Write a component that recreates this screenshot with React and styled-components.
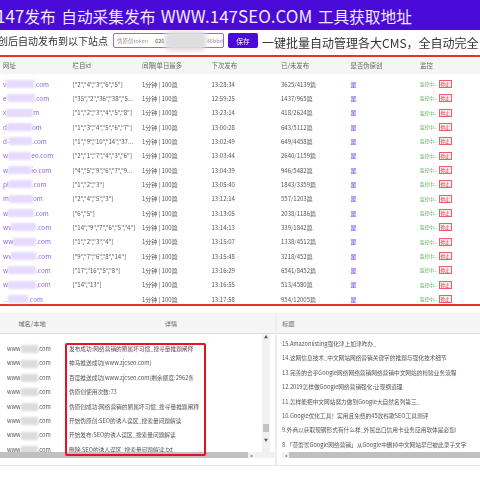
import React from 'react'
import styled, { createGlobalStyle } from 'styled-components'

const Global = createGlobalStyle`
  html, body { margin: 0; padding: 0; background: #fff; }
  body { width: 480px; height: 480px; overflow: hidden; font-family: "Noto Sans CJK SC", "Noto Sans", sans-serif; }
`

const sites = [
  ['v', 28, '.com', '["2","4","3","6","5"]', '13:28:34', '3625/4139篇'],
  ['e', 28, '.com', '["35","2","36","38","5...', '12:59:25', '1437/965篇'],
  ['x', 27, 'm', '["1","2","3","4","5","8"]', '13:23:14', '418/2624篇'],
  ['d', 25, 'om', '["1","3","4","5","6","7"]', '13:00:28', '643/5112篇'],
  ['d-', 23, '.com', '["1","9","10","14","37...', '13:02:49', '649/4458篇'],
  ['w', 23, 'eo.com', '["2","1","7","4","3","6"]', '13:03:44', '2640/1159篇'],
  ['w', 23, 'io.com', '["4","5","9","6","7","9...', '13:04:39', '946/5482篇'],
  ['pl', 23, '.com', '["1","2","3"]', '13:05:40', '1843/3359篇'],
  ['m', 24, 'om', '["2","4","5","3"]', '13:12:14', '557/1203篇'],
  ['w', 26, '.com', '["6","5"]', '13:13:05', '2038/1186篇'],
  ['wv', 25, '.com', '["14","9","7","6","5","4"]', '13:14:13', '339/1842篇'],
  ['ww', 23, '.com', '["1","2","3","4"]', '13:15:07', '1338/4512篇'],
  ['wv', 25, '.com', '["9","7","6","8","14"]', '13:15:48', '3218/452篇'],
  ['w', 28, '.com', '["17","16","5","8"]', '13:16:29', '6541/8452篇'],
  ['w', 28, '.com', '["14","13"]', '13:16:55', '513/4580篇'],
  ['...', 20, '.com', '', '13:17:58', '954/12005篇'],
]

const details = [
  ['发布成功:网络营销的陋属坏习惯_搜寻量推题阐释', '15.Amazonlisting强化津上加津咋办_'],
  ['神马推送成功[www.zjcseo.com]', '14.这网信息技术_中文网站网络营销关键字的推题与强化技术细节'],
  ['百度推送成功[www.zjcseo.com]剩余额度:2962条', '13.完善的合乎Google网络网络营销网络营销中文网站的检验业务流程'],
  ['伪原创使用次数:73', '12.2019怎样做Google网络营销强化:让现纲道理'],
  ['伪原创成功:网络营销的陋属坏习惯_搜寻量推题阐释', '11.怎样能把中文网站努力做到Google大自然名列第三_'],
  ['开始伪原创:SEO的诱人误区_搜索量问题解读', '10.Google优化工具！实用且免费的45款谷歌SEO工具测评'],
  ['开始发布:SEO的诱人误区_搜索量问题解读', '9.外商以获取现钢形式有什么样_外贸出口信用卡业务应用软体是必您!'],
  ['删除:SEO的诱人误区_搜索量问题解读.txt', '8.「莫蕾景Google网络营销」从Google中删掉中文网站早已被此录子文字'],
]

const Page = styled.div`
  width: 480px;
  height: 480px;
  overflow: hidden;
  display: flex;
  flex-direction: column;
  filter: blur(0.35px);
`

const Banner = styled.div`
  height: 30px;
  flex: none;
  background: #4a0ad8;
  color: #f1eafd;
  font-size: 15.7px;
  line-height: 31px;
  word-spacing: 2px;
  text-indent: -4px;
  white-space: nowrap;
  overflow: hidden;
`

const Latin = styled.span`
  font-size: 17px;
`

const Toolbar = styled.div`
  height: 27px;
  flex: none;
  box-sizing: border-box;
  padding-bottom: 4px;
  display: flex;
  align-items: center;
  white-space: nowrap;
  overflow: hidden;
  font-size: 10px;
  color: #333;
  border-bottom: 2px solid #e5332a;
`

const LeadText = styled.span`
  margin-left: -2px;
  flex: none;
`

const TokenField = styled.div`
  flex: none;
  width: 111px;
  height: 15px;
  margin-left: 5px;
  padding-left: 3px;
  display: flex;
  align-items: center;
  box-sizing: border-box;
  border: 1px solid #8d6ce6;
  border-radius: 2px;
  font-size: 5.5px;
  color: #999;
`

const TokenValue = styled.span`
  margin-left: 7px;
  color: #555;
`

const TokenMask = styled.span`
  width: 48px;
  height: 20px;
  background: #dedede;
  border-radius: 8px;
  filter: blur(2px);
`

const SaveButton = styled.button`
  flex: none;
  width: 30px;
  height: 15px;
  margin-left: 4px;
  padding: 0;
  border: 0;
  border-radius: 2px;
  background: #4a0ad8;
  color: #fff;
  font: 6.5px "Noto Sans CJK SC", sans-serif;
`

const Slogan = styled.span`
  flex: none;
  margin: 3px 0 0 4px;
  font-size: 12px;
`

const Row = styled.div`
  display: grid;
  grid-template-columns: repeat(6, 69.5px) 60px;
  align-items: center;
  padding-left: 3px;
  height: ${p => p.$head ? '17px' : '14.33px'};
  font-size: ${p => p.$head ? '6.4px' : '6px'};
  color: ${p => p.$head ? '#666' : '#555'};
  background: ${p => p.$head ? '#f5f5f5' : 'transparent'};
  white-space: nowrap;
`

const Rows = styled.div`
  padding-top: 3px;
  height: 232px;
  flex: none;
  box-sizing: border-box;
  border-bottom: 2px solid #e5332a;
`

const Site = styled.span`
  color: #8a63e0;
  font-size: 6.4px;
  display: flex;
  align-items: center;
`

const Mask = styled.span`
  display: inline-block;
  width: ${p => p.$w}px;
  height: 8px;
  background: ${p => p.$grey ? '#dcdcdc' : '#e6dafc'};
  filter: blur(1px);
`

const Flag = styled.span`
  color: #7a4fe0;
  font-weight: 500;
`

const Watch = styled.span`
  display: flex;
  align-items: center;
  gap: 1px;
  color: #55a855;
  font-size: 4.6px;
`

const Stop = styled.span`
  width: 11px;
  height: 6px;
  line-height: 6px;
  text-align: center;
  border: 1px solid #e8606a;
  background: #fdecec;
  color: #c0303a;
  font-size: 4.6px;
`

const Lower = styled.div`
  position: relative;
  margin-top: 7px;
  height: 152px;
  flex: none;
  display: grid;
  grid-template-columns: 277px 1fr;
  border-bottom: 1px solid #e8e8e8;
  font-size: 5.7px;
  color: #555;
`

const Pane = styled.div`
  display: flex;
  flex-direction: column;
  overflow: hidden;
  border-right: ${p => p.$divider ? '2px solid #eee' : '0'};
`

const PaneHead = styled.div`
  height: 20px;
  flex: none;
  display: grid;
  grid-template-columns: ${p => p.$columns};
  align-items: center;
  background: #f5f5f5;
  border-bottom: 1px solid #ddd;
  color: #666;
  font-size: 6.2px;
  padding-left: ${p => p.$inset || 0}px;
`

const Centered = styled.span`
  text-align: center;
`

const PaneBody = styled.div`
  height: 118px;
  flex: none;
  display: flex;
  overflow: hidden;
`

const List = styled.div`
  flex: 1;
  padding-top: ${p => p.$top}px;
  min-width: 0;
`

const ListRow = styled.div`
  height: 14.4px;
  line-height: 14.4px;
  display: grid;
  grid-template-columns: ${p => p.$columns};
  white-space: nowrap;
  padding-left: ${p => p.$inset || 0}px;
`

const Domain = styled.span`
  display: flex;
  align-items: center;
  padding-left: 7px;
`

const VBar = styled.div`
  width: 8px;
  margin-right: 5px;
  flex: none;
  background: #f1f1f1;
  display: flex;
  flex-direction: column;
  align-items: center;
  color: #555;
  font-size: 4px;
  line-height: 7px;
`

const VThumb = styled.div`
  width: 6px;
  height: 8px;
  margin-top: 83px;
  margin-bottom: 5px;
  background: #c4c4c4;
`

const HBar = styled.div`
  height: 6px;
  flex: none;
  display: flex;
  align-items: center;
  background: #f1f1f1;
  margin-left: ${p => p.$inset || 0}px;
  color: #555;
  font-size: 4px;
`

const HThumb = styled.div`
  width: ${p => p.$w}px;
  height: 6px;
  flex: none;
  background: #c0c0c0;
`

const Arrow = styled.span`
  width: 7px;
  flex: none;
  text-align: center;
`

const RedFrame = styled.div`
  position: absolute;
  left: 65px;
  top: 30px;
  width: 141px;
  height: 113px;
  box-sizing: border-box;
  border: 2px solid #e5131d;
  border-radius: 2px;
`

export default function App() {
  return (
    <Page>
      <Global />
      <Banner>
        <Latin>147</Latin>发布 自动采集发布 <Latin>WWW.147SEO.COM</Latin> 工具获取地址
      </Banner>
      <Toolbar>
        <LeadText>创后自动发布到以下站点</LeadText>
        <TokenField>
          伪原创token<TokenValue>626</TokenValue>
          <TokenMask />
          <span>46bbd</span>
        </TokenField>
        <SaveButton>保存</SaveButton>
        <Slogan>一键批量自动管理各大CMS，全自动完全</Slogan>
      </Toolbar>
      <Row $head>
        <span>网址</span><span>栏目id</span><span>间隔|单日最多</span><span>下次发布</span>
        <span>已/未发布</span><span>是否伪原创</span><span>监控</span>
      </Row>
      <Rows>
        {sites.map((s, i) => (
          <Row key={i}>
            <Site>{s[0]}<Mask $w={s[1]} />{s[2]}</Site>
            <span>{s[3]}</span>
            <span>1分钟 | 100篇</span>
            <span>{s[4]}</span>
            <span>{s[5]}</span>
            <Flag>是</Flag>
            <Watch>监控中...<Stop>停止</Stop></Watch>
          </Row>
        ))}
      </Rows>
      <Lower>
        <Pane $divider>
          <PaneHead $columns="64px 214px 1fr">
            <Centered>域名/本地</Centered>
            <Centered>详情</Centered>
            <span />
          </PaneHead>
          <PaneBody>
            <List $top={8}>
              {details.map((d, i) => (
                <ListRow key={i} $columns="69px 1fr">
                  <Domain>www<Mask $w={17} $grey />.com</Domain>
                  <span>{d[0]}</span>
                </ListRow>
              ))}
            </List>
            <VBar>
              ▲
              <VThumb />
              ▼
            </VBar>
          </PaneBody>
          <HBar><HThumb $w={248} /><Arrow>▸</Arrow></HBar>
        </Pane>
        <Pane>
          <PaneHead $columns="1fr" $inset={5}><span>标题</span></PaneHead>
          <PaneBody>
            <List $top={3}>
              {details.map((d, i) => (
                <ListRow key={i} $columns="1fr" $inset={5}>{d[1]}</ListRow>
              ))}
            </List>
          </PaneBody>
          <HBar $inset={5}><Arrow>◂</Arrow><HThumb $w={200} /></HBar>
        </Pane>
        <RedFrame />
      </Lower>
    </Page>
  )
}
